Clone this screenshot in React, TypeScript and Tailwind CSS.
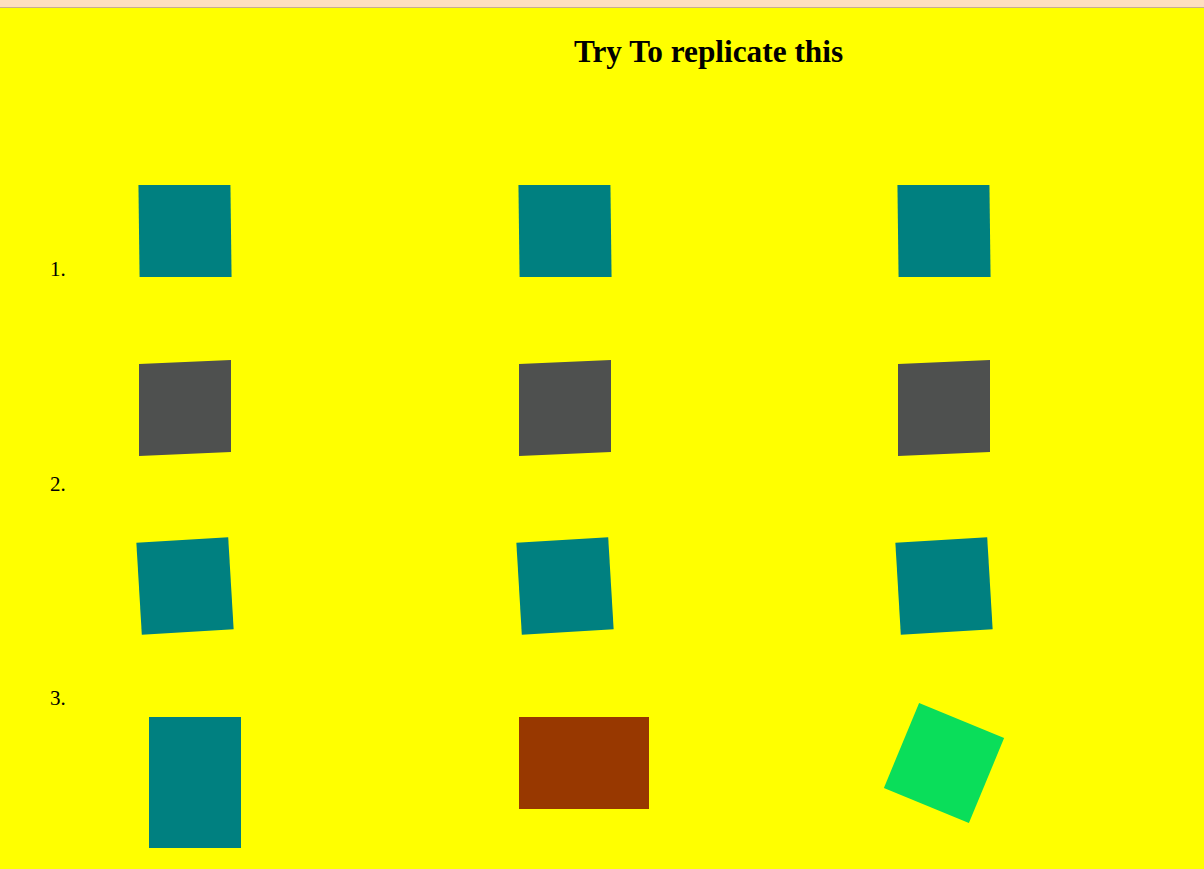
function Label({ text }: { text: string }) {
    return (
        <div className="pl-[50px] text-[21px] leading-[21px]">
            {text}
        </div>
    )
}

function App() {
    return (
        <div className="min-h-screen bg-[#ffff00] text-black font-['Liberation_Serif',serif]">
            <div className="h-[8px] bg-[#fedfbf] border-b border-[#c9ad90]" />
            <h1 className="mt-[26px] pl-[213px] text-center text-[31.3px] font-bold leading-[36px]">
                Try To replicate this
            </h1>

            {/* row 1 - slight skew on x */}
            <div className="flex h-[92px] mt-[115px] pl-[50px]">
                <div className="w-[88.5px] shrink-0 pt-[74px] text-[21px] leading-[21px]">1.</div>
                <div className="w-[380px] shrink-0">
                    <div className="w-[92px] h-[92px] bg-[#008080] skew-x-[0.7deg]" />
                </div>
                <div className="w-[379px] shrink-0">
                    <div className="w-[92px] h-[92px] bg-[#008080] skew-x-[0.7deg]" />
                </div>
                <div className="w-[92px] h-[92px] bg-[#008080] skew-x-[0.7deg]" />
            </div>

            {/* row 2 - skew on y */}
            <div className="flex mt-[85px] pl-[139px]">
                <div className="w-[380px] shrink-0">
                    <div className="w-[92px] h-[92px] bg-[#4e504f] -skew-y-[2.5deg]" />
                </div>
                <div className="w-[379px] shrink-0">
                    <div className="w-[92px] h-[92px] bg-[#4e504f] -skew-y-[2.5deg]" />
                </div>
                <div className="w-[92px] h-[92px] bg-[#4e504f] -skew-y-[2.5deg]" />
            </div>

            <div className="mt-[20px]">
                <Label text="2." />
            </div>

            {/* row 3 - rotated */}
            <div className="flex mt-[45px] pl-[139px]">
                <div className="w-[380px] shrink-0">
                    <div className="w-[92px] h-[92px] bg-[#008080] -rotate-[3.4deg]" />
                </div>
                <div className="w-[379px] shrink-0">
                    <div className="w-[92px] h-[92px] bg-[#008080] -rotate-[3.4deg]" />
                </div>
                <div className="w-[92px] h-[92px] bg-[#008080] -rotate-[3.4deg]" />
            </div>

            <div className="mt-[56px]">
                <Label text="3." />
            </div>

            {/* row 4 */}
            <div className="flex items-start mt-[8px] pl-[139px] pb-[20px]">
                <div className="w-[380px] shrink-0 pl-[10px]">
                    <div className="w-[92px] h-[131px] bg-[#008080]" />
                </div>
                <div className="w-[379px] shrink-0">
                    <div className="w-[130px] h-[92px] bg-[#983800]" />
                </div>
                <div className="w-[92px] h-[92px] bg-[#0ade5a] rotate-[22.5deg]" />
            </div>
        </div>
    )
}

export default App
